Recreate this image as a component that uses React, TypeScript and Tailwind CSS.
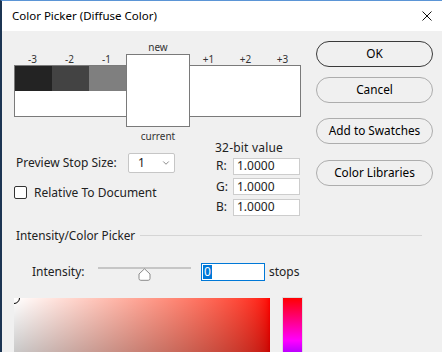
import { ChevronDown } from 'lucide-react';

const LEFT_CELLS = [
  { label: '-3', color: 'bg-[#232323]' },
  { label: '-2', color: 'bg-[#434343]' },
  { label: '-1', color: 'bg-[#7f7f7f]' },
];

const RIGHT_LABELS = ['+1', '+2', '+3'];

const BUTTONS = [
  { label: 'OK', mt: 'mt-0', border: 'border-[#3a3a3a]' },
  { label: 'Cancel', mt: 'mt-[10px]', border: 'border-[#adadad]' },
  { label: 'Add to Swatches', mt: 'mt-[15px]', border: 'border-[#adadad]' },
  { label: 'Color Libraries', mt: 'mt-[16px]', border: 'border-[#adadad]' },
];

const CHANNELS = ['R', 'G', 'B'];

function SliderThumb() {
  return (
    <svg width="13" height="13" viewBox="0 0 13 13" className="absolute left-[40px] top-[5px]">
      <path d="M6.5 0.8 L12 6 L12 10.5 Q12 12.3 10.2 12.3 L2.8 12.3 Q1 12.3 1 10.5 L1 6 Z" fill="#fff" stroke="#8a8a8a" strokeWidth="1" />
    </svg>
  );
}

export default function App() {
  return (
    <div className="w-[442px] h-[352px] overflow-hidden bg-[#f0f0f0] border-l-2 border-l-[#1c3553] border-t border-t-[#5b95d6] font-['Noto_Sans',sans-serif] text-[#222]">
      {/* title bar */}
      <div className="h-[30px] bg-white flex items-center justify-between pl-[10px] pr-[10px]">
        <span className="text-[11.5px] text-black">Color Picker (Diffuse Color)</span>
        <svg width="10" height="10" viewBox="0 0 10 10">
          <path d="M0.5 0.5 L9.5 9.5 M9.5 0.5 L0.5 9.5" stroke="#111" strokeWidth="1" />
        </svg>
      </div>

      <div className="flex pt-[10px]">
        {/* left area */}
        <div className="ml-[12px] w-[287px] flex flex-col">
          <div className="flex items-start">
            <div className="mt-[13px] w-[112px] flex flex-col">
              <div className="flex h-[11px]">
                {LEFT_CELLS.map((c) => (
                  <span key={c.label} className="w-[37px] text-center text-[10px] leading-[11px] text-[#333]">{c.label}</span>
                ))}
              </div>
              <div className="h-[52px] border border-r-0 border-[#7a7a7a] flex flex-col">
                <div className="flex h-[25px]">
                  {LEFT_CELLS.map((c) => (
                    <div key={c.label} className={`w-[37px] ${c.color}`} />
                  ))}
                </div>
                <div className="flex-1 bg-white" />
              </div>
            </div>
            <div className="w-[64px] flex flex-col items-center">
              <span className="h-[13px] text-[10px] leading-[12px] text-[#333]">new</span>
              <div className="w-[64px] h-[73px] bg-white border border-[#7a7a7a]" />
              <span className="mt-[3px] text-[10px] leading-[12px] text-[#333]">current</span>
            </div>
            <div className="mt-[13px] w-[111px] flex flex-col">
              <div className="flex h-[11px]">
                {RIGHT_LABELS.map((l) => (
                  <span key={l} className="w-[37px] text-center text-[10px] leading-[11px] text-[#333]">{l}</span>
                ))}
              </div>
              <div className="h-[52px] border border-l-0 border-[#7a7a7a] bg-white" />
            </div>
          </div>

          <div className="flex items-start">
            <div className="w-[201px] shrink-0 flex flex-col">
              <div className="mt-[11px] h-[20px] flex items-center">
                <span className="pl-[2px] w-[114px] text-[12px]">Preview Stop Size:</span>
                <div className="w-[47px] h-[20px] bg-white border border-[#c6c6c6] rounded-[2px] flex items-center justify-between pl-[9px] pr-[3px]">
                  <span className="text-[12px]">1</span>
                  <ChevronDown size={10} strokeWidth={1.5} className="text-[#444]" />
                </div>
              </div>
              <div className="mt-[13px] flex items-center h-[13px]">
                <div className="w-[13px] h-[13px] bg-white border border-[#333] rounded-[2px]" />
                <span className="ml-[7px] text-[12px]">Relative To Document</span>
              </div>
            </div>
            <div className="w-[86px] flex flex-col items-start text-left">
              <span className="text-[12px] leading-[12px] tracking-[0.2px]">32-bit value</span>
              <div className="mt-[3px] flex flex-col gap-[2.5px]">
                {CHANNELS.map((ch) => (
                  <div key={ch} className="flex items-center">
                    <span className="pl-[1px] w-[18px] text-[12px]">{ch}:</span>
                    <div className="w-[67px] h-[17px] bg-white border border-[#cdcdcd] pl-[3px] flex items-center text-[12px]">1.0000</div>
                  </div>
                ))}
              </div>
            </div>
          </div>
        </div>

        {/* buttons */}
        <div className="ml-[15px] w-[117px] flex flex-col">
          {BUTTONS.map((b) => (
            <button
              key={b.label}
              className={`${b.mt} h-[26px] w-[117px] rounded-full border ${b.border} bg-[#f0f0f0] text-[11.8px] text-black`}
            >
              {b.label}
            </button>
          ))}
        </div>
      </div>

      {/* intensity section */}
      <div className="mt-[13px] flex items-center h-[12px] pl-[14px] pr-[20px]">
        <span className="text-[11.8px] leading-[12px]">Intensity/Color Picker</span>
        <div className="ml-[5px] flex-1 h-px bg-[#d5d5d5]" />
      </div>

      <div className="mt-[22px] h-[18px] flex items-center">
        <span className="pl-[30px] w-[96px] text-[12px]">Intensity:</span>
        <div className="relative w-[93px] h-[18px]">
          <div className="absolute left-0 right-0 top-[4px] h-[2px] bg-[#c6c6c6]" />
          <SliderThumb />
        </div>
        <div className="ml-[10px] w-[64px] h-[18px] bg-white border border-[#0078d7] pl-[1px] flex items-center">
          <span className="bg-[#0078d7] text-white text-[12px] leading-[14px] px-[1px]">0</span>
        </div>
        <span className="ml-[4px] text-[12px]">stops</span>
      </div>

      <div className="mt-[17px] flex items-start pl-[12px]">
        <div className="relative w-[256px] h-[256px] overflow-hidden bg-linear-to-r from-white to-[#ff0000]">
          <div className="absolute inset-0 bg-linear-to-t from-black to-transparent" />
          <div className="absolute -left-[6px] -top-[6px] w-[12px] h-[12px] rounded-full border-[1.5px] border-black" />
        </div>
        <div className="ml-[12px] -mt-[1px] w-[21px] h-[258px] border border-[#dcdcdc]">
          <div className="w-full h-full bg-[linear-gradient(to_bottom,#f00,#f0f_16.67%,#00f_33.33%,#0ff_50%,#0f0_66.67%,#ff0_83.33%,#f00)]" />
        </div>
      </div>
    </div>
  );
}
